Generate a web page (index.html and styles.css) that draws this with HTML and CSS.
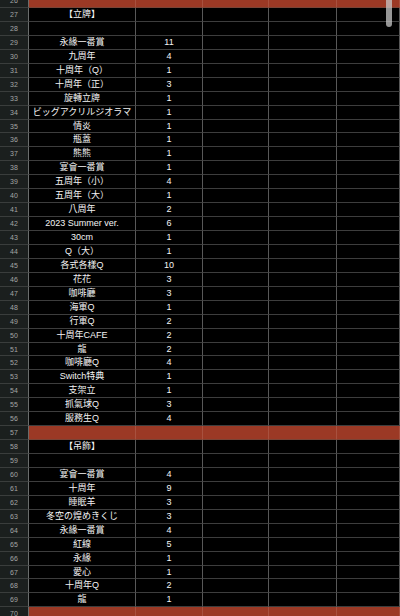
FILE: index.html
```html
<!DOCTYPE html>
<html>
<head>
<meta charset="utf-8">
<link rel="stylesheet" href="styles.css">
</head>
<body>
<div class="sheet">
<div class="row red"><div class="rh">26</div><div class="c a"></div><div class="c b"></div><div class="c c3"></div><div class="c d"></div><div class="c e"></div></div>
<div class="row"><div class="rh">27</div><div class="c a">【立牌】</div><div class="c b"></div><div class="c c3"></div><div class="c d"></div><div class="c e"></div></div>
<div class="row"><div class="rh">28</div><div class="c a"></div><div class="c b"></div><div class="c c3"></div><div class="c d"></div><div class="c e"></div></div>
<div class="row"><div class="rh">29</div><div class="c a">永緣一番賞</div><div class="c b">11</div><div class="c c3"></div><div class="c d"></div><div class="c e"></div></div>
<div class="row"><div class="rh">30</div><div class="c a">九周年</div><div class="c b">4</div><div class="c c3"></div><div class="c d"></div><div class="c e"></div></div>
<div class="row"><div class="rh">31</div><div class="c a">十周年（Q）</div><div class="c b">1</div><div class="c c3"></div><div class="c d"></div><div class="c e"></div></div>
<div class="row"><div class="rh">32</div><div class="c a">十周年（正）</div><div class="c b">3</div><div class="c c3"></div><div class="c d"></div><div class="c e"></div></div>
<div class="row"><div class="rh">33</div><div class="c a">旋轉立牌</div><div class="c b">1</div><div class="c c3"></div><div class="c d"></div><div class="c e"></div></div>
<div class="row"><div class="rh">34</div><div class="c a">ビッグアクリルジオラマ</div><div class="c b">1</div><div class="c c3"></div><div class="c d"></div><div class="c e"></div></div>
<div class="row"><div class="rh">35</div><div class="c a">情炎</div><div class="c b">1</div><div class="c c3"></div><div class="c d"></div><div class="c e"></div></div>
<div class="row"><div class="rh">36</div><div class="c a">瓶蓋</div><div class="c b">1</div><div class="c c3"></div><div class="c d"></div><div class="c e"></div></div>
<div class="row"><div class="rh">37</div><div class="c a">熊熊</div><div class="c b">1</div><div class="c c3"></div><div class="c d"></div><div class="c e"></div></div>
<div class="row"><div class="rh">38</div><div class="c a">宴會一番賞</div><div class="c b">1</div><div class="c c3"></div><div class="c d"></div><div class="c e"></div></div>
<div class="row"><div class="rh">39</div><div class="c a">五周年（小）</div><div class="c b">4</div><div class="c c3"></div><div class="c d"></div><div class="c e"></div></div>
<div class="row"><div class="rh">40</div><div class="c a">五周年（大）</div><div class="c b">1</div><div class="c c3"></div><div class="c d"></div><div class="c e"></div></div>
<div class="row"><div class="rh">41</div><div class="c a">八周年</div><div class="c b">2</div><div class="c c3"></div><div class="c d"></div><div class="c e"></div></div>
<div class="row"><div class="rh">42</div><div class="c a">2023 Summer ver.</div><div class="c b">6</div><div class="c c3"></div><div class="c d"></div><div class="c e"></div></div>
<div class="row"><div class="rh">43</div><div class="c a">30cm</div><div class="c b">1</div><div class="c c3"></div><div class="c d"></div><div class="c e"></div></div>
<div class="row"><div class="rh">44</div><div class="c a">Q（大）</div><div class="c b">1</div><div class="c c3"></div><div class="c d"></div><div class="c e"></div></div>
<div class="row"><div class="rh">45</div><div class="c a">各式各樣Q</div><div class="c b">10</div><div class="c c3"></div><div class="c d"></div><div class="c e"></div></div>
<div class="row"><div class="rh">46</div><div class="c a">花花</div><div class="c b">3</div><div class="c c3"></div><div class="c d"></div><div class="c e"></div></div>
<div class="row"><div class="rh">47</div><div class="c a">咖啡廳</div><div class="c b">3</div><div class="c c3"></div><div class="c d"></div><div class="c e"></div></div>
<div class="row"><div class="rh">48</div><div class="c a">海軍Q</div><div class="c b">1</div><div class="c c3"></div><div class="c d"></div><div class="c e"></div></div>
<div class="row"><div class="rh">49</div><div class="c a">行軍Q</div><div class="c b">2</div><div class="c c3"></div><div class="c d"></div><div class="c e"></div></div>
<div class="row"><div class="rh">50</div><div class="c a">十周年CAFE</div><div class="c b">2</div><div class="c c3"></div><div class="c d"></div><div class="c e"></div></div>
<div class="row"><div class="rh">51</div><div class="c a">龍</div><div class="c b">2</div><div class="c c3"></div><div class="c d"></div><div class="c e"></div></div>
<div class="row"><div class="rh">52</div><div class="c a">咖啡廳Q</div><div class="c b">4</div><div class="c c3"></div><div class="c d"></div><div class="c e"></div></div>
<div class="row"><div class="rh">53</div><div class="c a">Switch特典</div><div class="c b">1</div><div class="c c3"></div><div class="c d"></div><div class="c e"></div></div>
<div class="row"><div class="rh">54</div><div class="c a">支架立</div><div class="c b">1</div><div class="c c3"></div><div class="c d"></div><div class="c e"></div></div>
<div class="row"><div class="rh">55</div><div class="c a">抓氣球Q</div><div class="c b">3</div><div class="c c3"></div><div class="c d"></div><div class="c e"></div></div>
<div class="row"><div class="rh">56</div><div class="c a">服務生Q</div><div class="c b">4</div><div class="c c3"></div><div class="c d"></div><div class="c e"></div></div>
<div class="row red"><div class="rh">57</div><div class="c a"></div><div class="c b"></div><div class="c c3"></div><div class="c d"></div><div class="c e"></div></div>
<div class="row"><div class="rh">58</div><div class="c a">【吊飾】</div><div class="c b"></div><div class="c c3"></div><div class="c d"></div><div class="c e"></div></div>
<div class="row"><div class="rh">59</div><div class="c a"></div><div class="c b"></div><div class="c c3"></div><div class="c d"></div><div class="c e"></div></div>
<div class="row"><div class="rh">60</div><div class="c a">宴會一番賞</div><div class="c b">4</div><div class="c c3"></div><div class="c d"></div><div class="c e"></div></div>
<div class="row"><div class="rh">61</div><div class="c a">十周年</div><div class="c b">9</div><div class="c c3"></div><div class="c d"></div><div class="c e"></div></div>
<div class="row"><div class="rh">62</div><div class="c a">睡眠羊</div><div class="c b">3</div><div class="c c3"></div><div class="c d"></div><div class="c e"></div></div>
<div class="row"><div class="rh">63</div><div class="c a">冬空の煌めきくじ</div><div class="c b">3</div><div class="c c3"></div><div class="c d"></div><div class="c e"></div></div>
<div class="row"><div class="rh">64</div><div class="c a">永緣一番賞</div><div class="c b">4</div><div class="c c3"></div><div class="c d"></div><div class="c e"></div></div>
<div class="row"><div class="rh">65</div><div class="c a">紅線</div><div class="c b">5</div><div class="c c3"></div><div class="c d"></div><div class="c e"></div></div>
<div class="row"><div class="rh">66</div><div class="c a">永緣</div><div class="c b">1</div><div class="c c3"></div><div class="c d"></div><div class="c e"></div></div>
<div class="row"><div class="rh">67</div><div class="c a">愛心</div><div class="c b">1</div><div class="c c3"></div><div class="c d"></div><div class="c e"></div></div>
<div class="row"><div class="rh">68</div><div class="c a">十周年Q</div><div class="c b">2</div><div class="c c3"></div><div class="c d"></div><div class="c e"></div></div>
<div class="row"><div class="rh">69</div><div class="c a">龍</div><div class="c b">1</div><div class="c c3"></div><div class="c d"></div><div class="c e"></div></div>
<div class="row red"><div class="rh">70</div><div class="c a"></div><div class="c b"></div><div class="c c3"></div><div class="c d"></div><div class="c e"></div></div>
</div>
<div class="thumb"></div>
</body>
</html>
```
FILE: styles.css
```css
html, body {
  margin: 0;
  padding: 0;
  background: #000;
  width: 400px;
  height: 616px;
  overflow: hidden;
}
body {
  position: relative;
  font-family: "Liberation Sans", "Noto Sans CJK TC", sans-serif;
}
.sheet {
  margin-top: -5.95px;
  display: flex;
  flex-direction: column;
}
.row {
  display: flex;
  height: 13.95px;
}
.rh {
  width: 29px;
  flex: none;
  box-sizing: border-box;
  height: 100%;
  background: #1b1f1e;
  color: #a3a6a5;
  font-size: 7px;
  line-height: 13px;
  text-align: center;
  border-bottom: 1px solid #3a3d3c;
  border-right: 1px solid #6a6d6c;
}
.c {
  flex: none;
  box-sizing: border-box;
  height: 100%;
  border-bottom: 1px solid #3d3d3d;
  border-right: 1px solid #585858;
  color: #f4f4f4;
  font-size: 9px;
  line-height: 13px;
  text-align: center;
  white-space: nowrap;
  overflow: visible;
}
.a { width: 107px; }
.b { width: 67px; }
.c3 { width: 66px; }
.d { width: 68px; }
.e { flex: 1; }
.red .c {
  background: #9b3925;
  border-bottom-color: #7a4436;
  border-right-color: #a8513f;
}
.thumb {
  position: absolute;
  left: 386px;
  top: 0;
  width: 6px;
  height: 27px;
  background: rgba(200, 200, 200, 0.75);
  border-radius: 0 0 3px 3px;
}
```
